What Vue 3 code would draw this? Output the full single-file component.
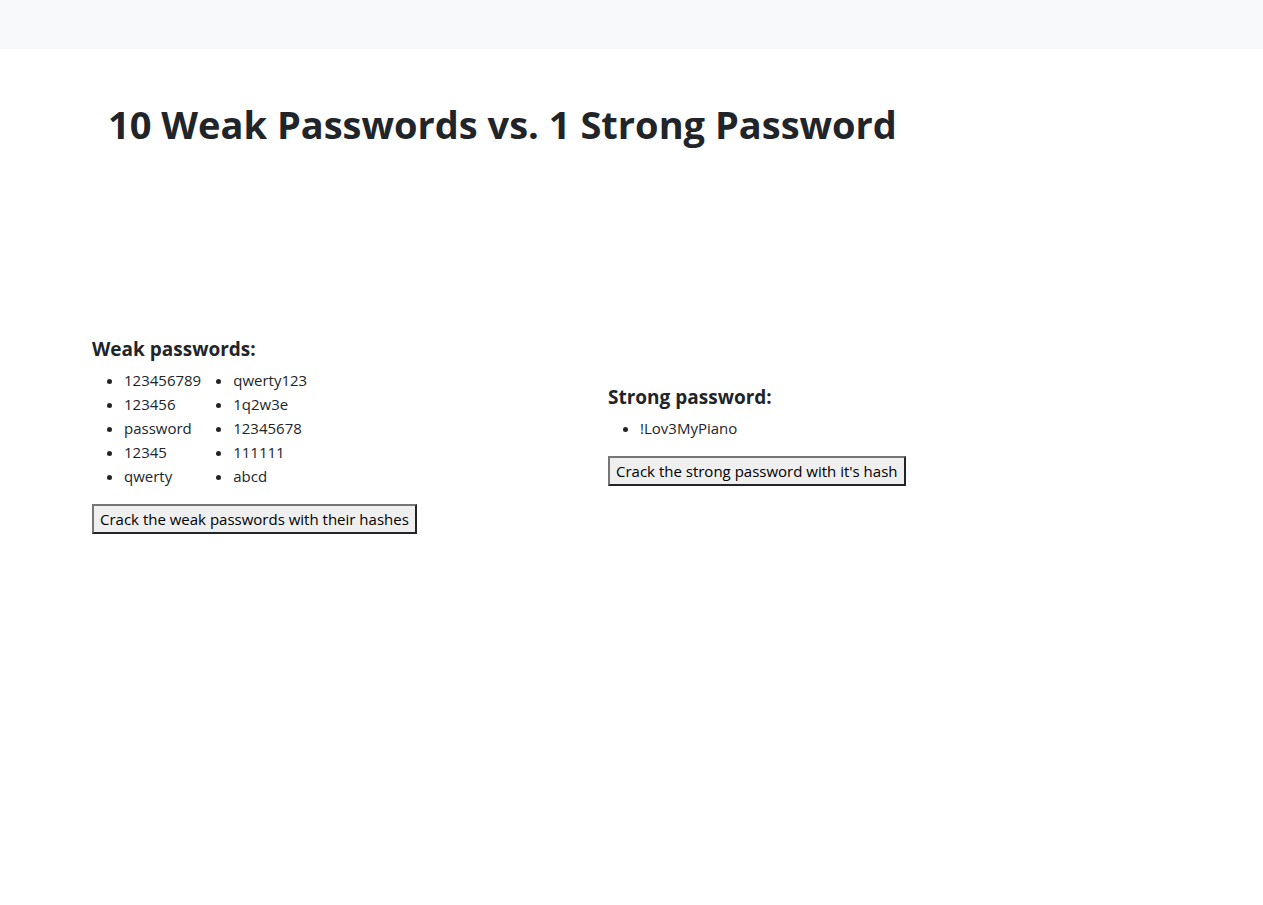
<script setup>
const weakColumns = [
  ['123456789', '123456', 'password', '12345', 'qwerty'],
  ['qwerty123', '1q2w3e', '12345678', '111111', 'abcd'],
]
</script>

<template>
  <div class="page">
    <nav class="navbar" aria-label="Main"></nav>
    <main class="container">
      <h1>10 Weak Passwords vs. 1 Strong Password</h1>
      <div class="columns">
        <section>
          <h2>Weak passwords:</h2>
          <div class="lists">
            <ul v-for="(column, i) in weakColumns" :key="i">
              <li v-for="item in column" :key="item">{{ item }}</li>
            </ul>
          </div>
          <button type="button">Crack the weak passwords with their hashes</button>
        </section>
        <section>
          <h2>Strong password:</h2>
          <ul>
            <li>!Lov3MyPiano</li>
          </ul>
          <button type="button">Crack the strong password with it's hash</button>
        </section>
      </div>
    </main>
  </div>
</template>

<style>
body {
  margin: 0;
  background: #fff;
}
</style>

<style scoped>
.page {
  color: #212529;
  font-family: "Segoe UI", "Open Sans", "Noto Sans", sans-serif;
  font-size: 15px;
  line-height: 24px;
}
.navbar {
  height: 49px;
  background: #f8f9fb;
}
.container {
  padding: 51px 92px 0;
}
h1 {
  margin: 0;
  padding: 0 16px;
  font-size: 38px;
  line-height: 48px;
  font-weight: 700;
}
.columns {
  display: grid;
  grid-template-columns: 516px 1fr;
  align-items: center;
  margin-top: 189px;
}
h2 {
  margin: 0 0 7px;
  font-size: 19px;
  line-height: 24px;
  font-weight: 700;
}
.lists {
  display: flex;
}
ul {
  margin: 0 0 16px;
  padding-left: 32px;
}
button {
  height: 30px;
  padding: 0 6px;
  border: 2px solid;
  border-color: #767676 #212529 #212529 #767676;
  background: #efefef;
  color: #000;
  font: inherit;
  white-space: nowrap;
}
</style>
